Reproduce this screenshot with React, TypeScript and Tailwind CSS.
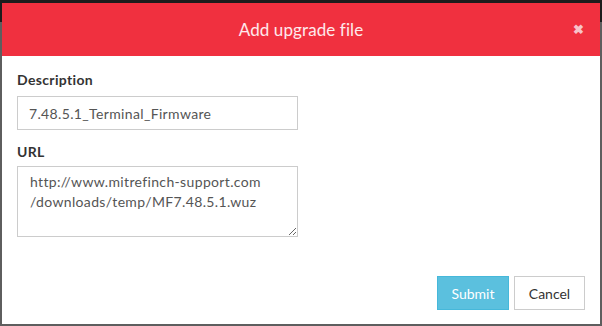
export default function App() {
  return (
    <div className="w-[602px] h-[326px] bg-[linear-gradient(#1c1c1c_22px,#5e5e5e_22px)] pt-[3px] pl-[2px] pr-[2px] pb-[2px] font-['Lato',sans-serif]">
      <div className="bg-white h-full flex flex-col">
        {/* Header */}
        <div className="relative h-[53px] bg-[#f0303f] flex items-center justify-center">
          <h2 className="text-[17px] text-white/90 tracking-[0.1px]">Add upgrade file</h2>
          <span className="absolute right-[16px] top-[20px] text-[13px] leading-none text-[#f7c3c9] font-bold">✖</span>
        </div>

        {/* Body */}
        <div className="px-[15px] pt-[14px] flex flex-col tracking-[0.35px]">
          <label className="text-[14px] font-bold text-[#333] leading-[20px]">Description</label>
          <input
            defaultValue="7.48.5.1_Terminal_Firmware"
            className="mt-[6px] w-[281px] h-[34px] border border-[#ccc] px-[11px] text-[14px] text-[#555] outline-none tracking-[0.35px] font-['Lato',sans-serif]"
          />
          <label className="mt-[12px] text-[14px] font-bold text-[#333] leading-[20px]">URL</label>
          <textarea
            defaultValue={"http://www.mitrefinch-support.com\n/downloads/temp/MF7.48.5.1.wuz"}
            className="mt-[4px] w-[281px] h-[71px] border border-[#ccc] px-[12px] pt-[5px] text-[14px] leading-[20px] text-[#555] outline-none resize-y tracking-[0.35px] font-['Lato',sans-serif]"
          />
        </div>

        {/* Footer */}
        <div className="mt-auto flex justify-end gap-[5px] px-[15px] pb-[14px]">
          <button className="w-[72px] h-[34px] bg-[#5bc0de] border border-[#46b8da] text-white text-[14px]">Submit</button>
          <button className="w-[71px] h-[34px] bg-white border border-[#ccc] text-[#333] text-[14px]">Cancel</button>
        </div>
      </div>
    </div>
  );
}
